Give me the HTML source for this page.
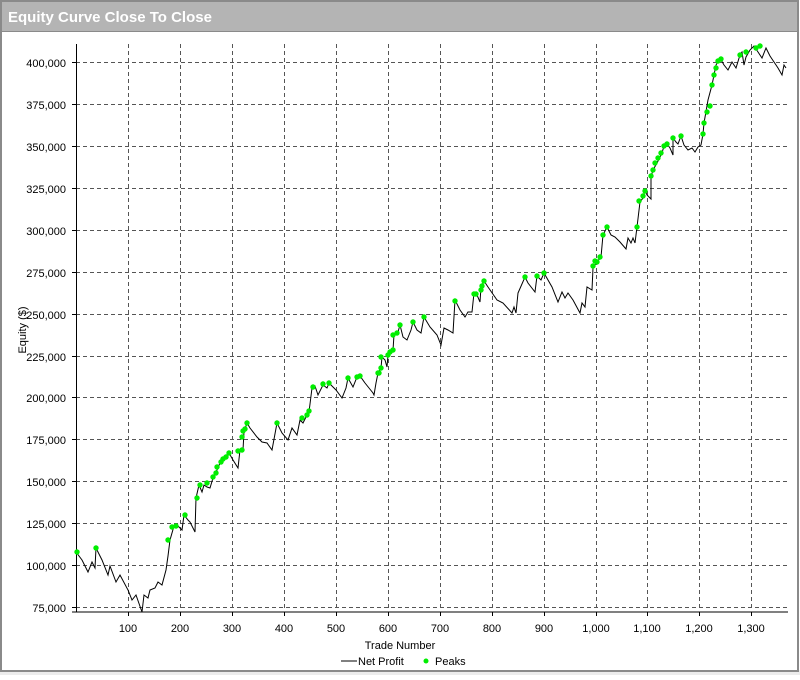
<!DOCTYPE html>
<html><head><meta charset="utf-8"><style>
body{margin:0;width:800px;height:675px;background:#fff;overflow:hidden;font-family:"Liberation Sans",sans-serif}
</style></head><body>
<svg width="800" height="675" viewBox="0 0 800 675" xmlns="http://www.w3.org/2000/svg" font-family="Liberation Sans, sans-serif">
<rect x="0" y="0" width="800" height="675" fill="#fff"/>
<rect x="0" y="670" width="800" height="5" fill="#ececec"/>
<rect x="1" y="1" width="797" height="670" fill="none" stroke="#8a8a8a" stroke-width="2"/>
<rect x="2" y="2" width="795" height="29" fill="#b4b4b4"/>
<line x1="2" y1="31.5" x2="797" y2="31.5" stroke="#8a8a8a"/>
<text x="8" y="22" font-size="15" font-weight="bold" fill="#fff">Equity Curve Close To Close</text>
<g stroke="#555" stroke-dasharray="4,3" stroke-width="1">
<path d="M128.5 44V611M180.5 44V611M232.5 44V611M284.5 44V611M336.5 44V611M388.5 44V611M440.5 44V611M492.5 44V611M544.5 44V611M596.5 44V611M647.5 44V611M699.5 44V611M751.5 44V611"/>
<path d="M76 62.5H788M76 104.5H788M76 146.5H788M76 188.5H788M76 230.5H788M76 272.5H788M76 314.5H788M76 356.5H788M76 397.5H788M76 439.5H788M76 481.5H788M76 523.5H788M76 565.5H788M76 607.5H788"/>
</g>
<g stroke="#000" stroke-width="1">
<path d="M76.5 44V612M72 612H788"/>
<path d="M72 62.5H76M72 104.5H76M72 146.5H76M72 188.5H76M72 230.5H76M72 272.5H76M72 314.5H76M72 356.5H76M72 397.5H76M72 439.5H76M72 481.5H76M72 523.5H76M72 565.5H76M72 607.5H76"/>
<path d="M128.5 612V616M180.5 612V616M232.5 612V616M284.5 612V616M336.5 612V616M388.5 612V616M440.5 612V616M492.5 612V616M544.5 612V616M596.5 612V616M647.5 612V616M699.5 612V616M751.5 612V616"/>
</g>
<g font-size="11" fill="#000" text-anchor="end">
<text x="66" y="67">400,000</text><text x="66" y="109">375,000</text><text x="66" y="151">350,000</text><text x="66" y="193">325,000</text><text x="66" y="235">300,000</text><text x="66" y="277">275,000</text><text x="66" y="319">250,000</text><text x="66" y="361">225,000</text><text x="66" y="402">200,000</text><text x="66" y="444">175,000</text><text x="66" y="486">150,000</text><text x="66" y="528">125,000</text><text x="66" y="570">100,000</text><text x="66" y="612">75,000</text>
</g>
<g font-size="11" fill="#000" text-anchor="middle">
<text x="128" y="632">100</text><text x="180" y="632">200</text><text x="232" y="632">300</text><text x="284" y="632">400</text><text x="336" y="632">500</text><text x="388" y="632">600</text><text x="440" y="632">700</text><text x="492" y="632">800</text><text x="544" y="632">900</text><text x="596" y="632">1,000</text><text x="647" y="632">1,100</text><text x="699" y="632">1,200</text><text x="751" y="632">1,300</text>
<text x="400" y="649">Trade Number</text>
</g>
<text transform="translate(26,330) rotate(-90)" font-size="11" text-anchor="middle">Equity ($)</text>
<line x1="341" y1="661" x2="357" y2="661" stroke="#555" stroke-width="1.5"/>
<text x="358" y="665" font-size="11">Net Profit</text>
<circle cx="426" cy="661" r="2.5" fill="#00ee00"/>
<text x="435" y="665" font-size="11">Peaks</text>
<polyline fill="none" stroke="#000" stroke-width="1" points="76,552 82,560 88,572 92,562 95,568 96,548 102,560 108,575 110,566 116,582 120,575 128,590 132,600 136,595 142,612 144,595 148,598 150,590 155,588 158,582 162,585 166,570 168,556 170,540 174,526 178,526 182,530 184,515 188,520 190,522 195,532 196,498 199,485 202,492 204,485 207,487 210,488 213,478 217,470 220,463 223,458 229,453 233,460 238,468 240,450 243,450 244,432 247,423 250,428 257,437 262,442 267,443 272,450 277,423 282,433 288,440 292,428 297,435 300,420 303,423 306,417 309,412 312,388 315,386 318,395 323,385 327,388 329,383 336,390 342,398 346,388 348,378 353,387 357,377 360,376 365,383 369,388 373,393 374,395 376,383 378,373 381,368 382,357 385,360 387,367 388,355 393,350 394,335 398,332 400,325 403,337 407,340 411,330 413,322 417,330 421,333 424,317 430,327 437,335 441,345 444,328 448,330 453,333 455,300 460,310 465,317 468,312 472,312 474,293 477,295 480,302 481,287 484,281 488,287 497,300 503,303 512,313 514,307 516,313 518,293 525,277 528,283 535,292 537,276 541,280 544,273 552,287 558,302 562,292 565,298 568,293 573,300 580,313 582,303 585,307 587,287 592,290 593,268 597,262 601,257 603,235 607,227 611,235 615,237 620,242 626,249 628,238 631,243 633,238 635,243 637,227 640,202 643,198 645,190 647,195 651,199 651,177 653,170 657,163 660,157 662,153 664,146 667,144 670,148 673,155 673,138 676,142 678,144 681,136 684,145 688,150 692,148 695,152 698,147 701,145 703,134 704,123 708,100 712,85 716,65 720,58 724,65 728,70 732,62 736,68 740,55 742,52 744,65 746,57 750,50 754,46 758,52 762,58 766,48 770,56 774,62 778,68 782,75 784,65 786,68"/>
<g fill="#00ee00">
<circle cx="77" cy="552" r="2.7"/><circle cx="96" cy="548" r="2.7"/><circle cx="168" cy="540" r="2.7"/><circle cx="172" cy="527" r="2.7"/><circle cx="176" cy="526" r="2.7"/><circle cx="185" cy="515" r="2.7"/>
<circle cx="197" cy="498" r="2.7"/><circle cx="200" cy="485" r="2.7"/><circle cx="207" cy="483" r="2.7"/><circle cx="213" cy="477" r="2.7"/><circle cx="216" cy="473" r="2.7"/><circle cx="217" cy="467" r="2.7"/><circle cx="221" cy="462" r="2.7"/><circle cx="223" cy="459" r="2.7"/><circle cx="226" cy="457" r="2.7"/><circle cx="229" cy="453" r="2.7"/><circle cx="238" cy="451" r="2.7"/><circle cx="242" cy="450" r="2.7"/><circle cx="242" cy="437" r="2.7"/><circle cx="243" cy="431" r="2.7"/><circle cx="245" cy="429" r="2.7"/><circle cx="247" cy="423" r="2.7"/><circle cx="277" cy="423" r="2.7"/><circle cx="302" cy="418" r="2.7"/><circle cx="307" cy="415" r="2.7"/><circle cx="309" cy="411" r="2.7"/><circle cx="313" cy="387" r="2.7"/><circle cx="323" cy="384" r="2.7"/><circle cx="329" cy="383" r="2.7"/><circle cx="348" cy="378" r="2.7"/><circle cx="357" cy="377" r="2.7"/><circle cx="360" cy="376" r="2.7"/><circle cx="378" cy="373" r="2.7"/>
<circle cx="379" cy="373" r="2.7"/><circle cx="381" cy="368" r="2.7"/><circle cx="381" cy="357" r="2.7"/><circle cx="388" cy="355" r="2.7"/><circle cx="390" cy="352" r="2.7"/><circle cx="393" cy="350" r="2.7"/><circle cx="393" cy="335" r="2.7"/><circle cx="397" cy="333" r="2.7"/><circle cx="400" cy="325" r="2.7"/><circle cx="413" cy="322" r="2.7"/><circle cx="424" cy="317" r="2.7"/><circle cx="455" cy="301" r="2.7"/><circle cx="474" cy="294" r="2.7"/><circle cx="476" cy="294" r="2.7"/><circle cx="481" cy="290" r="2.7"/><circle cx="482" cy="286" r="2.7"/><circle cx="484" cy="281" r="2.7"/><circle cx="525" cy="277" r="2.7"/><circle cx="537" cy="276" r="2.7"/><circle cx="544" cy="273" r="2.7"/>
<circle cx="593" cy="266" r="2.7"/><circle cx="595" cy="261" r="2.7"/><circle cx="597" cy="262" r="2.7"/><circle cx="600" cy="257" r="2.7"/><circle cx="603" cy="235" r="2.7"/><circle cx="607" cy="227" r="2.7"/><circle cx="637" cy="227" r="2.7"/><circle cx="639" cy="201" r="2.7"/><circle cx="643" cy="196" r="2.7"/><circle cx="645" cy="191" r="2.7"/><circle cx="651" cy="176" r="2.7"/><circle cx="653" cy="170" r="2.7"/><circle cx="655" cy="163" r="2.7"/><circle cx="658" cy="158" r="2.7"/><circle cx="661" cy="153" r="2.7"/><circle cx="664" cy="146" r="2.7"/><circle cx="667" cy="144" r="2.7"/><circle cx="673" cy="138" r="2.7"/><circle cx="681" cy="136" r="2.7"/><circle cx="703" cy="134" r="2.7"/><circle cx="704" cy="123" r="2.7"/>
<circle cx="707" cy="112" r="2.7"/><circle cx="710" cy="106" r="2.7"/><circle cx="712" cy="85" r="2.7"/><circle cx="714" cy="75" r="2.7"/><circle cx="716" cy="68" r="2.7"/><circle cx="718" cy="61" r="2.7"/><circle cx="721" cy="59" r="2.7"/><circle cx="740" cy="55" r="2.7"/><circle cx="746" cy="52" r="2.7"/><circle cx="756" cy="48" r="2.7"/><circle cx="760" cy="46" r="2.7"/>
</g>
</svg>
</body></html>
